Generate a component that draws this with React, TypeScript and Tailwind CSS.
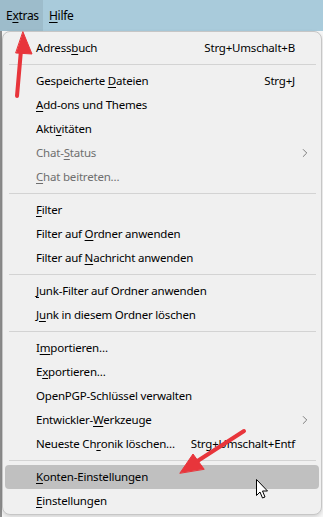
import { ChevronRight } from 'lucide-react';

type Item =
  | { sep: true }
  | {
      sep?: false;
      label: string;
      u: number; // index of mnemonic letter
      shortcut?: string;
      sub?: boolean;
      disabled?: boolean;
      active?: boolean;
    };

const items: Item[] = [
  { label: 'Adressbuch', u: 6, shortcut: 'Strg+Umschalt+B' },
  { sep: true },
  { label: 'Gespeicherte Dateien', u: 13, shortcut: 'Strg+J' },
  { label: 'Add-ons und Themes', u: 0 },
  { label: 'Aktivitäten', u: 4 },
  { label: 'Chat-Status', u: 5, sub: true, disabled: true },
  { label: 'Chat beitreten…', u: 0, disabled: true },
  { sep: true },
  { label: 'Filter', u: 0 },
  { label: 'Filter auf Ordner anwenden', u: 11 },
  { label: 'Filter auf Nachricht anwenden', u: 11 },
  { sep: true },
  { label: 'Junk-Filter auf Ordner anwenden', u: 0 },
  { label: 'Junk in diesem Ordner löschen', u: 1 },
  { sep: true },
  { label: 'Importieren…', u: 1 },
  { label: 'Exportieren…', u: 1 },
  { label: 'OpenPGP-Schlüssel verwalten', u: -1 },
  { label: 'Entwickler-Werkzeuge', u: 11, sub: true },
  { label: 'Neueste Chronik löschen…', u: 10, shortcut: 'Strg+Umschalt+Entf' },
  { sep: true },
  { label: 'Konten-Einstellungen', u: 0, active: true },
  { label: 'Einstellungen', u: 0 },
];

const Mnemonic = ({ text, u }: { text: string; u: number }) => {
  if (u < 0) return <>{text}</>;
  return (
    <>
      {text.slice(0, u)}
      <span className="underline underline-offset-2">{text[u]}</span>
      {text.slice(u + 1)}
    </>
  );
};

const App = () => {
  return (
    <div
      className="relative w-[323px] h-[517px] overflow-hidden bg-[#f7f7f7] text-[11.5px] tracking-[-0.2px] text-black"
      style={{ fontFamily: '"Noto Sans", "Open Sans", sans-serif' }}
    >
      {/* Menu bar */}
      <div className="flex h-[31px] items-stretch bg-[#a9cbdb] text-[12px] tracking-[-0.3px]">
        <div className="flex w-[43px] items-center bg-[#9dbccb] pl-[6px]">
          <Mnemonic text="Extras" u={1} />
        </div>
        <div className="flex items-center pl-[6px]">
          <Mnemonic text="Hilfe" u={0} />
        </div>
      </div>

      {/* Window content behind the menu */}
      <div className="flex h-[486px]">
        <div className="w-[2px] bg-[#8e8e8e]" />
        <div className="flex-1" />
      </div>

      {/* Dropdown menu */}
      <div className="absolute left-[2px] top-[31px] w-[320px] rounded-[8px] border border-[#c6c6c6] bg-[#f0f0f0] pt-[4px] pb-[1px] shadow-[0_2px_4px_rgba(0,0,0,0.15)]">
        {items.map((it, i) =>
          it.sep ? (
            <div key={i} className="py-[4px] pl-[6px] pr-[5px]">
              <div className="h-px bg-[#d3d3d3]" />
            </div>
          ) : (
            <div
              key={i}
              className={`mx-[2px] flex h-[24px] items-center rounded-[4px] pl-[31px] pr-[24px] ${
                it.active ? 'bg-[#c0c0c0]' : ''
              } ${it.disabled ? 'text-[#6e6e6e]' : 'text-black'}`}
            >
              <span className="flex-1 whitespace-nowrap">
                <Mnemonic text={it.label} u={it.u} />
              </span>
              {it.shortcut && <span className="whitespace-nowrap">{it.shortcut}</span>}
              {it.sub && (
                <ChevronRight className="-mr-[17px] h-[14px] w-[14px] text-[#5a5a5a]" strokeWidth={1.3} />
              )}
            </div>
          )
        )}
      </div>

      {/* Annotation arrows */}
      <svg className="pointer-events-none absolute left-0 top-0" width="323" height="517">
        <g fill="#e8353b" stroke="#e8353b" strokeLinecap="round">
          <line x1="17" y1="96" x2="21" y2="50" strokeWidth="4" />
          <polygon points="23,32 32,54 16,53" strokeWidth="1" strokeLinejoin="round" />
          <line x1="244" y1="431" x2="196" y2="462" strokeWidth="4" />
          <polygon points="180,473 193,454 204,469" strokeWidth="1" strokeLinejoin="round" />
        </g>
        {/* mouse cursor */}
        <path
          d="M256.5 479.5 L256.5 495.5 L260 492 L262.5 498 L265 497 L262.5 491 L267.5 491 Z"
          fill="#ffffff"
          stroke="#000000"
          strokeWidth="1"
          strokeLinejoin="round"
        />
      </svg>
    </div>
  );
};

export default App;
